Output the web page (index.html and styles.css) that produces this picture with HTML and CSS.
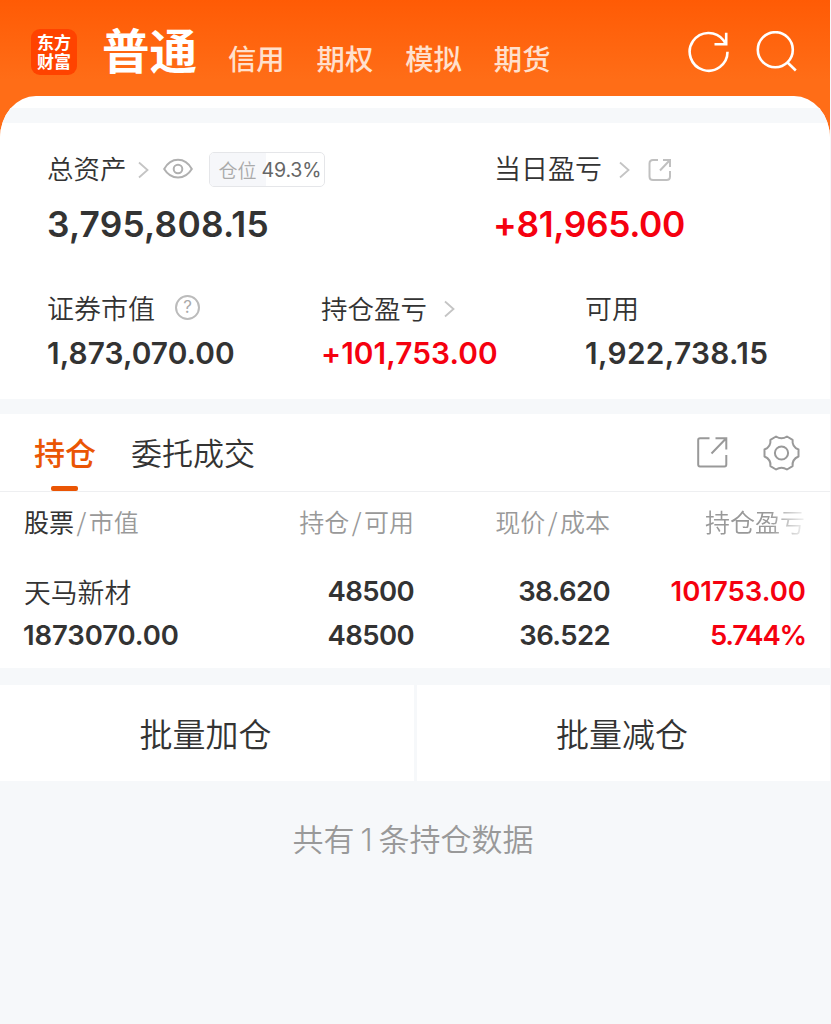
FILE: index.html
```
<!DOCTYPE html>
<html lang="zh-CN">
<head>
<meta charset="utf-8">
<title>普通</title>
<link rel="stylesheet" href="styles.css">
</head>
<body>
<div class="app">
  <header class="top">
    <div class="logo">东方<br>财富</div>
    <h1 class="mode-active">普通</h1>
    <nav class="modes"><span>信用</span><span>期权</span><span>模拟</span><span>期货</span></nav>
    <div class="top-icons">
      <svg width="42" height="42" viewBox="0 0 42 42" fill="none" stroke="#fff" stroke-width="2.6"><path d="M39.500 20.800A18.900 18.900 0 1 1 35.500 9.200L38 13"/><path d="M26.500 13.200H38.200V1.800"/></svg>
      <svg width="42" height="42" viewBox="0 0 42 42" fill="none" stroke="#fff" stroke-width="2.6"><circle cx="19.300" cy="18.700" r="17.500"/><path d="M31 31L39.800 39.500"/></svg>
    </div>
  </header>
  <main class="sheet">
    <div class="strip"></div>
    <section class="summary">
      <div class="row row-main">
        <div class="cell">
          <div class="label"><span class="asset">总资产</span>
            <svg class="chev" width="11" height="18" viewBox="0 0 11 18"><path d="M1 1.5L9.5 9L1 16.5"/></svg>
            <svg class="eye" width="30" height="22" viewBox="0 0 30 22"><path d="M1.2 11C8 -1.3 22 -1.3 28.8 11C22 22.3 8 22.3 1.2 11Z"/><circle cx="15" cy="11" r="4.3"/></svg>
            <span class="badge"><span class="badge-name">仓位</span><span class="badge-value">49.3%</span></span>
          </div>
          <div class="big total">3,795,808.15</div>
        </div>
        <div class="cell">
          <div class="label"><span>当日盈亏</span>
            <svg class="chev chev-day" width="11" height="18" viewBox="0 0 11 18"><path d="M1 1.5L9.5 9L1 16.5"/></svg>
            <svg class="share" width="24" height="24" viewBox="0 0 24 24"><path d="M10 2H5Q1.500 2 1.500 5.500V18.500Q1.500 22 5 22H18.500Q22 22 22 18.500V13M12 12.500L21.500 2.500M15 2H22V9"/></svg>
          </div>
          <div class="big day up">+81,965.00</div>
        </div>
      </div>
      <div class="row row-sub">
        <div class="cell">
          <div class="label"><span>证券市值</span>
            <span class="help">?</span>
          </div>
          <div class="mid">1,873,070.00</div>
        </div>
        <div class="cell">
          <div class="label"><span class="asset">持仓盈亏</span>
            <svg class="chev chev-day" width="11" height="18" viewBox="0 0 11 18"><path d="M1 1.5L9.5 9L1 16.5"/></svg>
          </div>
          <div class="mid up">+101,753.00</div>
        </div>
        <div class="cell">
          <div class="label"><span>可用</span></div>
          <div class="mid cash">1,922,738.15</div>
        </div>
      </div>
    </section>
    <section class="holdings">
      <div class="tabs">
        <div class="tab tab-on">持仓</div>
        <div class="tab">委托成交</div>
        <div class="tools">
          <svg width="31" height="31" viewBox="0 0 31 31"><path d="M12.500 1.200H3Q1.200 1.200 1.200 3V27.500Q1.200 29.500 3 29.500H27.500Q29.300 29.500 29.300 27.500V18M14.500 16.500L29 1.500M18.500 1.200H29.300V12.500"/></svg>
          <svg width="37" height="36" viewBox="0 0 37 36"><path d="M13 1.500Q18.500 5 24 1.500L29.600 4.800Q28.800 11.600 35.500 14.500V21.500Q28.800 24.400 29.600 31.200L24 34.500Q18.500 31 13 34.500L7.400 31.200Q8.200 24.400 1.500 21.500V14.500Q8.200 11.600 7.400 4.800Z" stroke-linejoin="round"/><circle cx="18.500" cy="18" r="6.600"/></svg>
        </div>
      </div>
      <div class="grid head">
        <div class="first"><b>股票</b><i>/</i>市值</div>
        <div>持仓<i>/</i>可用</div>
        <div>现价<i>/</i>成本</div>
        <div class="fade">持仓盈亏</div>
      </div>
      <div class="grid line-name">
        <div class="first stock">天马新材</div><div class="num tight">48500</div><div class="num tight">38.620</div><div class="num up">101753.00</div>
      </div>
      <div class="grid line-value">
        <div class="first num value">1873070.00</div><div class="num tight">48500</div><div class="num tight">36.522</div><div class="num rate up">5.744%</div>
      </div>
    </section>
    <section class="actions"><div>批量加仓</div><div>批量减仓</div></section>
    <p class="count">共有<span>1</span>条持仓数据</p>
  </main>
</div>
</body>
</html>
```
FILE: styles.css
```
* { box-sizing: border-box; }
body {
  margin: 0;
  background: #f6f8fa;
  color: #333;
  font-family: Inter, "Noto Sans CJK SC", sans-serif;
}
svg { display: block; flex: none; }
i { font-style: normal; }
.app {
  width: 830px;
  height: 1024px;
  overflow: hidden;
  background: linear-gradient(#ff5b05 0, #ff6d17 80px, #ff6d17 140px);
}
.top {
  height: 96px;
  display: flex;
  align-items: flex-start;
  padding-left: 31px;
  color: #fff;
  font-family: "Noto Sans CJK SC", sans-serif;
}
.logo {
  width: 46px;
  height: 46px;
  margin-top: 29px;
  padding-top: 3px;
  border-radius: 9px;
  background: #ff4300;
  text-align: center;
  font: 700 17px/19px "Noto Sans CJK SC", sans-serif;
}
.mode-active {
  margin: 19px 0 0 25px;
  font-size: 47.5px;
  line-height: 60px;
  font-weight: 700;
}
.modes {
  display: flex;
  gap: 32px;
  margin: 38px 0 0 31px;
  font-size: 28.3px;
  line-height: 40px;
  font-weight: 500;
  color: #ffe0cd;
}
.top-icons { display: flex; gap: 26px; margin: 31px 0 0 138px; }
.sheet {
  height: 928px;
  padding-top: 12px;
  border-radius: 36px 36px 0 0 / 42px 42px 0 0;
  background: linear-gradient(#fff 0, #fff 300px, #f6f8fa 300px);
  overflow: hidden;
}
.strip { height: 15px; background: #f6f8fa; }
.summary { height: 276px; padding: 27px 0 0 47px; background: #fff; }
.row { display: grid; }
.row-main { grid-template-columns: 447px 1fr; height: 139px; }
.row-sub { grid-template-columns: 274px 264px 1fr; }
.label {
  height: 36px;
  display: flex;
  align-items: center;
  white-space: nowrap;
  font: 350 27px/36px "Noto Sans CJK SC", sans-serif;
}
.row-sub .label { padding-top: 1px; }
.asset { font-size: 26.5px; }
.big, .mid, .num { font-weight: 600; }
.big { margin-top: 19px; font-size: 35.3px; line-height: 40px; }
.mid { margin-top: 8px; font-size: 29.8px; line-height: 40px; letter-spacing: 0.1px; }
.total { letter-spacing: 0.2px; }
.day { margin-left: -1px; letter-spacing: -0.35px; }
.cash { letter-spacing: 0.35px; }
.up { color: #f5000f; }
.chev { margin: 3px 0 0 11px; fill: none; stroke: #c4c4c4; stroke-width: 1.8; }
.chev-day { margin-left: 17px; }
.eye { margin: 1px 0 0 14px; fill: none; stroke: #b0b0b0; stroke-width: 2; }
.share { margin: 3px 0 0 18px; fill: none; stroke: #c0c0c0; stroke-width: 2; }
.badge {
  display: flex;
  width: 116px;
  height: 35px;
  margin: 3px 0 0 16px;
  border: 1px solid #e5e6e9;
  border-radius: 5px;
  overflow: hidden;
  font-size: 19px;
  line-height: 33px;
}
.badge-name { width: 56px; padding-left: 9px; background: #f6f7fa; color: #aaa; }
.badge-value { margin-left: -4px; font-family: Inter, sans-serif; font-size: 19.6px; line-height: 35px; letter-spacing: -0.2px; font-weight: 400; color: #666; }
.help {
  width: 25px;
  height: 25px;
  margin: 0 0 0 20px;
  border: 1.5px solid #bbb;
  border-width: 2px;
  border-radius: 50%;
  color: #aaa;
  font: 400 17px/21px Inter, sans-serif;
  text-align: center;
}
.holdings { height: 254px; margin-top: 15px; background: #fff; }
.tabs {
  height: 78px;
  display: flex;
  padding-left: 34px;
  gap: 35px;
  border-bottom: 1px solid #eeeff1;
  font: 350 31px/76px "Noto Sans CJK SC", sans-serif;
}
.tab { position: relative; }
.tab-on { color: #ea5504; font-weight: 500; }
.tab-on::after {
  content: "";
  position: absolute;
  left: 17px;
  bottom: 0;
  width: 27px;
  height: 5px;
  border-radius: 2px;
  background: #ea5504;
}
.tools { display: flex; align-items: center; gap: 35px; margin: 0 30px 0 auto; fill: none; stroke: #999; stroke-width: 2; }
.grid {
  display: grid;
  grid-template-columns: 200px 190px 196px 196px;
  padding-left: 24px;
  text-align: right;
  white-space: nowrap;
}
.first { text-align: left; }
.head { height: 60px; font: 350 25px/58px "Noto Sans CJK SC", sans-serif; color: #999; }
.head b { font-weight: 400; color: #333; }
.head i { padding: 0 2.5px; }
.fade {
  padding-right: 1px;
  -webkit-mask-image: linear-gradient(90deg, #000 160px, transparent 200px);
  mask-image: linear-gradient(90deg, #000 160px, transparent 200px);
}
.line-name { height: 44px; margin-top: 17px; }
.line-value { height: 44px; }
.stock { font: 350 26.8px/45px "Noto Sans CJK SC", sans-serif; }
.num { font-size: 27.5px; line-height: 44px; }
.tight { letter-spacing: -0.6px; }
.value { margin-left: -1px; letter-spacing: -0.1px; }
.rate { letter-spacing: -1.2px; }
.actions {
  height: 96px;
  margin-top: 17px;
  display: grid;
  grid-template-columns: 414px 1fr;
  gap: 3px;
  text-align: center;
  font: 350 33px/96px "Noto Sans CJK SC", sans-serif;
}
.actions div { padding-right: 3px; background: #fff; }
.count {
  margin: 33px 0 0;
  padding-right: 4px;
  text-align: center;
  font: 350 31px/48px "Noto Sans CJK SC", sans-serif;
  color: #999;
}
.count span { font-family: Inter, sans-serif; margin: 0 6px; }
```
